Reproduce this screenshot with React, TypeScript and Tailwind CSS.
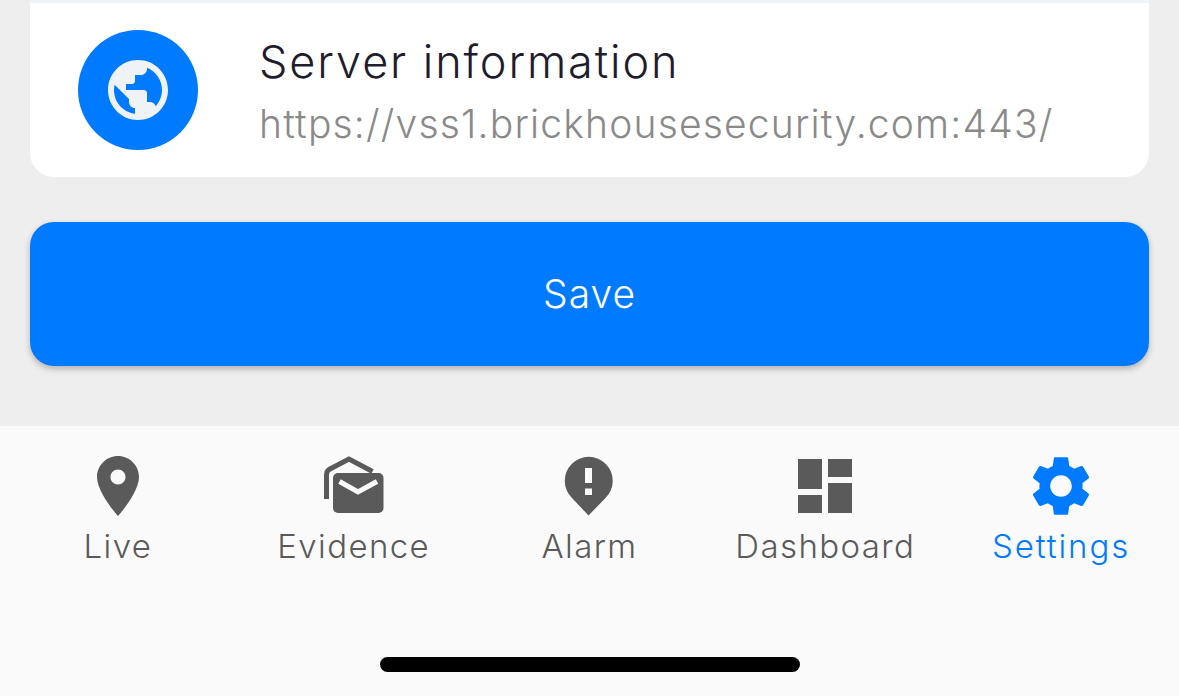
import React from 'react';

const font = "font-['Inter','Noto_Sans',sans-serif]";

const PlaceIcon = () => (
  <svg viewBox="0 0 24 24" className="w-[72px] h-[72px] fill-[#5a5a5a]">
    <path d="M12 2C8.13 2 5 5.13 5 9c0 5.25 7 13 7 13s7-7.75 7-13c0-3.87-3.13-7-7-7zm0 9.5c-1.38 0-2.5-1.12-2.5-2.5s1.12-2.5 2.5-2.5 2.5 1.12 2.5 2.5-1.12 2.5-2.5 2.5z" />
  </svg>
);

const EvidenceIcon = () => (
  <svg viewBox="0 0 72 72" className="w-[72px] h-[72px]">
    <path d="M8.5 49 V25 Q8.5 21 11.5 19.3 L31 9 L54.5 21.5" fill="none" stroke="#5a5a5a" strokeWidth="5" />
    <rect x="15" y="23" width="50.5" height="40" rx="5" fill="#5a5a5a" />
    <path d="M21.5 31.5 L40 42 L59 31.5" fill="none" stroke="#fafafa" strokeWidth="5" />
  </svg>
);

const AlarmIcon = () => (
  <svg viewBox="0 0 72 72" className="w-[72px] h-[72px]">
    <path d="M35.5 65.5 L19 48 A24 24 0 1 1 52.5 48 Z" fill="#5a5a5a" />
    <rect x="32" y="18" width="7" height="15" fill="#fafafa" />
    <rect x="32" y="38.5" width="7" height="6.5" fill="#fafafa" />
  </svg>
);

const DashboardIcon = () => (
  <svg viewBox="0 0 24 24" className="w-[72px] h-[72px] fill-[#5a5a5a]">
    <path d="M3 13h8V3H3v10zm0 8h8v-6H3v6zm10 0h8V11h-8v10zm0-18v6h8V3h-8z" />
  </svg>
);

const SettingsIcon = () => (
  <svg viewBox="0 0 24 24" className="w-[72px] h-[72px] fill-[#007aff]">
    <path d="M19.14,12.94c0.04-0.3,0.06-0.61,0.06-0.94c0-0.32-0.02-0.64-0.07-0.94l2.03-1.58c0.18-0.14,0.23-0.41,0.12-0.61 l-1.92-3.32c-0.12-0.22-0.37-0.29-0.59-0.22l-2.39,0.96c-0.5-0.38-1.03-0.7-1.62-0.94L14.4,2.81c-0.04-0.24-0.24-0.41-0.48-0.41 h-3.84c-0.24,0-0.43,0.17-0.47,0.41L9.25,5.35C8.66,5.59,8.12,5.92,7.63,6.29L5.24,5.33c-0.22-0.08-0.47,0-0.59,0.22L2.74,8.87 C2.62,9.08,2.66,9.34,2.86,9.48l2.03,1.58C4.84,11.36,4.8,11.69,4.8,12s0.02,0.64,0.07,0.94l-2.03,1.58 c-0.18,0.14-0.23,0.41-0.12,0.61l1.92,3.32c0.12,0.22,0.37,0.29,0.59,0.22l2.39-0.96c0.5,0.38,1.03,0.7,1.62,0.94l0.36,2.54 c0.05,0.24,0.24,0.41,0.48,0.41h3.84c0.24,0,0.44-0.17,0.47-0.41l0.36-2.54c0.59-0.24,1.13-0.56,1.62-0.94l2.39,0.96 c0.22,0.08,0.47,0,0.59-0.22l1.92-3.32c0.12-0.22,0.07-0.47-0.12-0.61L19.14,12.94z M12,15.6c-1.98,0-3.6-1.62-3.6-3.6 s1.62-3.6,3.6-3.6s3.6,1.62,3.6,3.6S13.98,15.6,12,15.6z" />
  </svg>
);

const tabs = [
  { label: 'Live', icon: <PlaceIcon /> },
  { label: 'Evidence', icon: <EvidenceIcon /> },
  { label: 'Alarm', icon: <AlarmIcon /> },
  { label: 'Dashboard', icon: <DashboardIcon /> },
  { label: 'Settings', icon: <SettingsIcon />, active: true },
];

const App: React.FC = () => {
  return (
    <div className={`w-[1179px] h-[696px] overflow-hidden flex flex-col bg-[#eeeeee] ${font}`}>
      <div className="h-[426px] px-[30px]">
        <div className="h-[177px] bg-white border-t-[3px] border-[#eff3f5] rounded-b-[24px] flex items-center pl-[48px]">
          <div className="w-[120px] h-[120px] rounded-full bg-[#007aff] flex items-center justify-center">
            <svg viewBox="0 0 24 24" className="w-[72px] h-[72px] fill-[#eff3f5]">
              <path d="M12 2C6.48 2 2 6.48 2 12s4.48 10 10 10 10-4.48 10-10S17.52 2 12 2zm-1 17.93c-3.95-.49-7-3.85-7-7.93 0-.62.08-1.21.21-1.79L9 15v1c0 1.1.9 2 2 2v1.93zm6.9-2.54c-.26-.81-1-1.39-1.9-1.39h-1v-3c0-.55-.45-1-1-1H8v-2h2c.55 0 1-.45 1-1V7h2c1.1 0 2-.9 2-2v-.41c2.93 1.19 5 4.06 5 7.41 0 2.08-.8 3.97-2.1 5.39z" />
            </svg>
          </div>
          <div className="ml-[61px] pt-[6px] flex flex-col">
            <span className="text-[45px] leading-[62px] tracking-[1.9px] font-[350] text-[#1f1c2e]">Server information</span>
            <span className="text-[39px] leading-[62px] tracking-[1.18px] font-[350] text-[#8a8a8a]">https://vss1.brickhousesecurity.com:443/</span>
          </div>
        </div>
        <button className="block mt-[45px] w-full h-[144px] rounded-[24px] bg-[#007aff] text-white text-[39px] tracking-[1px] font-[350] shadow-[0_3px_6px_rgba(0,0,0,0.25)]">
          Save
        </button>
      </div>
      <div className="flex-1 bg-[#fafafa] flex flex-col">
        <div className="flex pt-[24px]">
          {tabs.map((tab) => (
            <div key={tab.label} className="flex-1 flex flex-col items-center">
              {tab.icon}
              <span className={`text-[33px] leading-[48px] font-[350] ${tab.active ? 'tracking-[1.9px] text-[#007aff]' : 'tracking-[1.4px] text-[#5a5a5a]'}`}>
                {tab.label}
              </span>
            </div>
          ))}
        </div>
        <div className="mt-[87px] mx-auto w-[420px] h-[15px] rounded-full bg-black" />
      </div>
    </div>
  );
};

export default App;
